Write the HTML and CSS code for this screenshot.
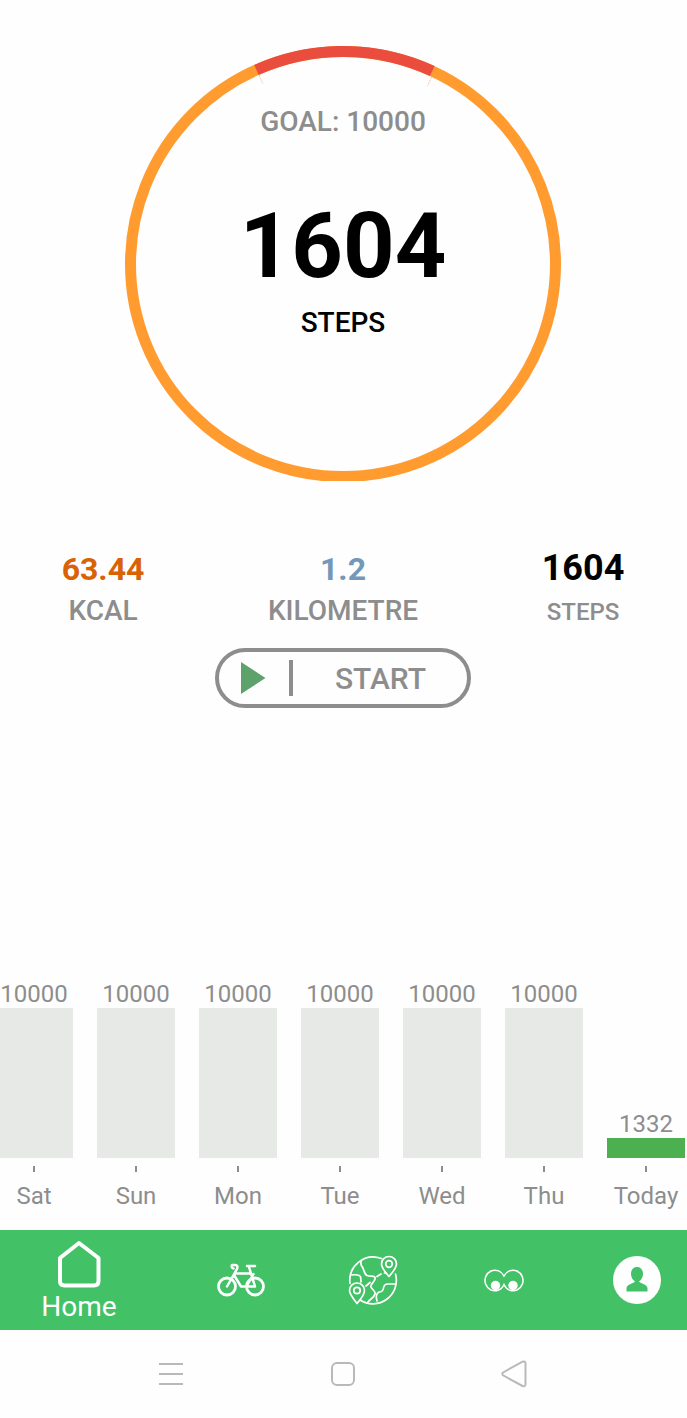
FILE: index.html
```html
<!DOCTYPE html>
<html lang="en">
<head>
<meta charset="utf-8">
<title>Step counter</title>
<link rel="stylesheet" href="styles.css">
</head>
<body>
<main class="screen">
  <section class="gauge">
    <svg class="gauge-ring" viewBox="0 0 436 435" width="436" height="435" fill="none" stroke-width="11">
      <circle cx="218" cy="218" r="212.5" stroke="#ff9b2f"/>
      <path d="M131.5 23.9A212.5 212.5 0 0 1 307.3 25.1" stroke="#ea4c3e"/>
      <path d="M134 29l4 9M306.500 31l-4 9" stroke="#f0b890" stroke-width=".8" stroke-dasharray="2 1"/>
    </svg>
    <div class="gauge-text">
      <div class="goal">GOAL: 10000</div>
      <div class="count">1604</div>
      <div class="unit">STEPS</div>
    </div>
  </section>

  <section class="stats">
    <div class="stat"><div class="value kcal">63.44</div><div class="label">KCAL</div></div>
    <div class="stat"><div class="value km">1.2</div><div class="label">KILOMETRE</div></div>
    <div class="stat"><div class="value steps">1604</div><div class="label small">STEPS</div></div>
  </section>

  <button class="start">
    <svg class="play" viewBox="0 0 25 33" width="25" height="33"><path d="M0 0L24.500 16L0 32Z" fill="#5ea26b"/></svg>
    <span class="divider"></span>
    <span class="start-label">START</span>
  </button>

  <section class="chart">
    <div class="day"><span class="amount">10000</span><span class="bar" style="height:150px"></span><span class="tick"></span><span class="name">Sat</span></div>
    <div class="day"><span class="amount">10000</span><span class="bar" style="height:150px"></span><span class="tick"></span><span class="name">Sun</span></div>
    <div class="day"><span class="amount">10000</span><span class="bar" style="height:150px"></span><span class="tick"></span><span class="name">Mon</span></div>
    <div class="day"><span class="amount">10000</span><span class="bar" style="height:150px"></span><span class="tick"></span><span class="name">Tue</span></div>
    <div class="day"><span class="amount">10000</span><span class="bar" style="height:150px"></span><span class="tick"></span><span class="name">Wed</span></div>
    <div class="day"><span class="amount">10000</span><span class="bar" style="height:150px"></span><span class="tick"></span><span class="name">Thu</span></div>
    <div class="day today"><span class="amount">1332</span><span class="bar" style="height:20px"></span><span class="tick"></span><span class="name">Today</span></div>
  </section>

  <nav class="tabs">
    <a class="tab home">
      <svg viewBox="0 0 44 48" width="44" height="48" fill="none" stroke="#fff" stroke-width="4" stroke-linejoin="round"><path d="M22 3L41.500 18V41Q41.500 45.500 37 45.500H7.500Q3 45.500 3 41V18Z"/></svg>
      <span>Home</span>
    </a>
    <a class="tab">
      <svg viewBox="0 0 50 36" width="50" height="36" fill="none" stroke="#fff" stroke-width="2.800" stroke-linecap="round" stroke-linejoin="round">
        <circle cx="11" cy="24.500" r="8.500"/><circle cx="39" cy="24.500" r="8.500"/>
        <path d="M11 24.500L21 7Q22.500 3 19 3H16Q15 6 17.500 6.500M19.500 11.500H35M18 13L25 24.500H30.500L37.500 12M25 24.500H39L33 5M31 4H39" stroke-width="2.500"/>
      </svg>
    </a>
    <a class="tab">
      <svg viewBox="0 0 50 50" width="50" height="50" fill="none" stroke="#fff" stroke-width="1.700" stroke-linecap="round" stroke-linejoin="round">
        <path d="M33.500 3.500A23.500 23.500 0 0 0 2 28.500M12 45A23.500 23.500 0 0 0 47.500 19"/>
        <path d="M41 21.500Q33.500 13 33.500 9A7.500 7.500 0 0 1 48.500 9Q48.500 13 41 21.500Z"/><circle cx="41" cy="9" r="3.300"/>
        <path d="M9 48.500Q1.500 39 1.500 35.500A7.500 7.500 0 0 1 16.500 35.500Q16.500 40 9 48.500Z"/><circle cx="9" cy="35.500" r="3.200"/>
        <path d="M3 20Q12 19 12.500 22T13 27"/>
        <path d="M13.500 5.500Q12 9 14 11.500C16 14 16 19 19 20.500C23 22 28 20 27 24C26 28 22 29 23 32C24 35 28 36 27 39C26 43 22 44 20 47"/>
        <path d="M47 29H40Q36 29 35.500 33T31 37Q27 39 29 46"/>
        <path d="M18 31L22 27.500M29 21.500L33 19M36.500 18H38"/>
      </svg>
    </a>
    <a class="tab">
      <svg viewBox="0 0 40 24" width="40" height="24" fill="none" stroke="#fff" stroke-width="1.500">
        <path d="M20 8A10 10.300 0 1 0 14 22.300Q18 21 20 16.500Q22 21 26 22.300A10 10.300 0 1 0 20 8Z"/>
        <circle cx="11.500" cy="17.500" r="4.700" fill="#fff" stroke="none"/><circle cx="29" cy="17.500" r="4.700" fill="#fff" stroke="none"/>
      </svg>
    </a>
    <a class="tab">
      <svg viewBox="0 0 48 48" width="48" height="48"><circle cx="24" cy="24" r="24" fill="#fff"/><path d="M24 11C20 11 18 14 18 18C18 21 19.500 24 22 25.500C20 28 14 28 13.500 32V35.500H34.500V32C34 28 28 28 26 25.500C28.500 24 30 21 30 18C30 14 28 11 24 11Z" fill="#43c167"/></svg>
    </a>
  </nav>

  <footer class="system">
    <svg viewBox="0 0 24 24" width="24" height="24" stroke="#b9b9b9" stroke-width="2"><path d="M0 2H24M0 12H24M0 22H24"/></svg>
    <svg viewBox="0 0 24 24" width="24" height="24" fill="none" stroke="#b9b9b9" stroke-width="2"><rect x="1" y="1" width="22" height="22" rx="5"/></svg>
    <svg viewBox="0 0 26 28" width="26" height="28" fill="none" stroke="#b9b9b9" stroke-width="2"><path d="M2 12.500L21.500 1.700Q24.500 .7 24.500 3.500V24Q24.500 27 21.500 26L2 15.300Q.5 13.900 2 12.500Z"/></svg>
  </footer>
</main>
</body>
</html>
```

FILE: styles.css
```css
* { box-sizing: border-box; }

body {
  margin: 0;
  background: #fefefe;
  font-family: Roboto, "Liberation Sans", sans-serif;
  color: #8d8d8d;
}

.screen {
  display: flex;
  flex-direction: column;
  width: 687px;
  height: 1418px;
  overflow: hidden;
}

.gauge {
  display: grid;
  justify-items: center;
  width: 686px;
  height: 481px;
  padding-top: 46px;
}

.gauge-ring,
.gauge-text { grid-area: 1 / 1; }

.gauge-text {
  text-align: center;
  padding-top: 59px;
  font-weight: 500;
}

.goal { font-size: 28px; line-height: 33px; }

.count {
  margin-top: 54px;
  font-size: 90px;
  line-height: 110px;
  font-weight: 700;
  color: #000;
}

.unit {
  margin-top: 4px;
  font-size: 28px;
  line-height: 33px;
  color: #000;
}

.stats {
  display: grid;
  grid-template-columns: 206px 274px 206px;
  padding-top: 68px;
  text-align: center;
}

.value {
  font-size: 32px;
  line-height: 40px;
  font-weight: 700;
}

.kcal { color: #da6206; }
.km { color: #7498b8; }

.steps {
  font-size: 36px;
  line-height: 38px;
  padding-bottom: 2px;
  color: #000;
}

.label {
  font-size: 28px;
  line-height: 44px;
  font-weight: 500;
}

.label.small { font-size: 24px; line-height: 47px; }

.start {
  display: flex;
  align-items: center;
  width: 256px;
  height: 60px;
  margin: 12px 0 0 215px;
  padding: 0 41px 0 22px;
  border: 4px solid #8d8d8d;
  border-radius: 30px;
  background: transparent;
  color: #8d8d8d;
  font: 500 30px/36px Roboto, "Liberation Sans", sans-serif;
}

.divider {
  width: 4px;
  height: 36px;
  margin-left: 23px;
  background: #8d8d8d;
}

.start-label { margin-left: auto; padding-top: 2px; }

.chart {
  display: flex;
  align-items: flex-end;
  gap: 24px;
  height: 240px;
  margin: auto 0 0 -5px;
}

.day {
  display: flex;
  flex: 0 0 78px;
  flex-direction: column;
  align-items: center;
  font-size: 24px;
}

.amount { line-height: 28px; }

.bar { width: 78px; background: #e6e9e5; }
.today .bar { background: #4caf50; }

.tick {
  width: 2px;
  height: 6px;
  margin-top: 8px;
  background: #8d8d8d;
}

.name { margin-top: 10px; line-height: 28px; }

.tabs {
  display: grid;
  grid-template-columns: 158px 166px 98px 164px 101px;
  align-items: center;
  justify-items: center;
  height: 100px;
  margin-top: 20px;
  background: #43c167;
}

.tab svg { display: block; }

.home {
  display: flex;
  flex-direction: column;
  align-items: center;
  gap: 2px;
  padding-top: 3px;
  color: #fff;
  font-size: 28px;
  line-height: 33px;
}

.system {
  display: flex;
  align-items: center;
  height: 88px;
  padding-left: 159px;
  gap: 148px;
}

.system svg:last-child { margin-left: -2px; }
```
